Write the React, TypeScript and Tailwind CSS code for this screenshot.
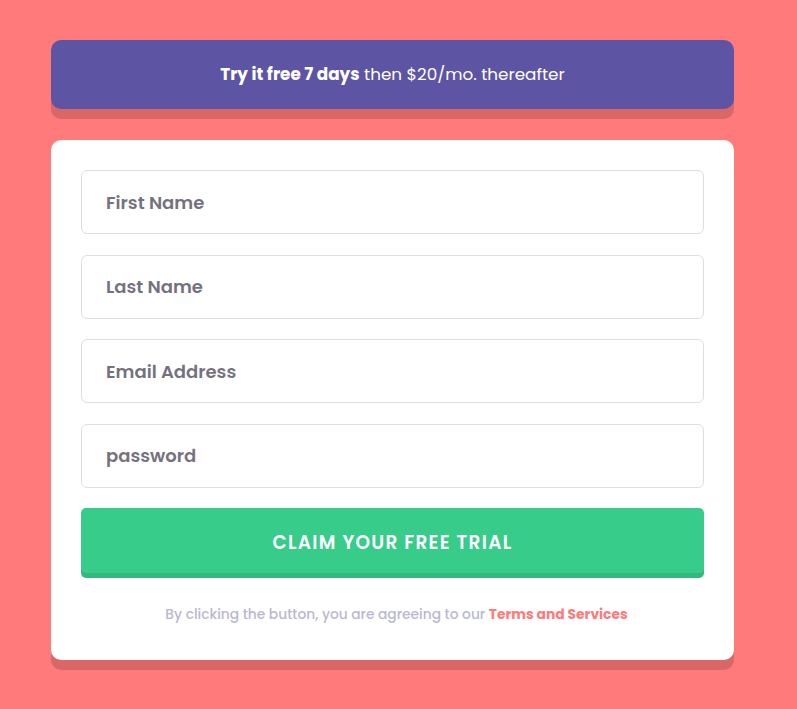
import React from 'react';

const fields = ['First Name', 'Last Name', 'Email Address', 'password'];

export default function App() {
  return (
    <div
      className="min-h-[709px] w-full bg-[#ff7a7a] pl-[51px] pt-[40px]"
      style={{ fontFamily: 'Poppins, Inter, "Open Sans", sans-serif' }}
    >
      <div className="w-[683px]">
        {/* ── Offer banner ───────────────────────────── */}
        <div className="flex h-[69px] items-center justify-center rounded-[10px] bg-[#5e54a4] text-[16.8px] text-white shadow-[0_10px_0_0_rgba(0,0,0,0.15)]">
          <p>
            <span className="font-bold">Try it free 7 days</span> then $20/mo. thereafter
          </p>
        </div>

        {/* ── Sign-up card ───────────────────────────── */}
        <div className="mt-[31px] rounded-[10px] bg-white px-[30px] pb-[34px] pt-[30px] shadow-[0_10px_0_0_rgba(0,0,0,0.15)]">
          <form className="flex flex-col gap-[20.5px]">
            {fields.map((f) => (
              <input
                key={f}
                placeholder={f}
                className="h-[64px] w-full rounded-[6px] border border-[#dedede] px-[24px] text-[18px] font-semibold text-[#3d3b48] outline-none placeholder:text-[#75727f]"
              />
            ))}
            <button
              type="button"
              className="h-[70px] w-full rounded-[5px] bg-[#38cc8b] text-[18.5px] font-semibold uppercase tracking-[1.3px] text-white shadow-[inset_0_-5px_0_0_rgba(0,0,0,0.09)]"
            >
              Claim your free trial
            </button>
          </form>
          <p className="mt-[27px] pl-[8px] text-center text-[13.8px] font-medium text-[#bab7d4]">
            By clicking the button, you are agreeing to our{' '}
            <a className="font-bold text-[#ff7a7a]">Terms and Services</a>
          </p>
        </div>
      </div>
    </div>
  );
}
